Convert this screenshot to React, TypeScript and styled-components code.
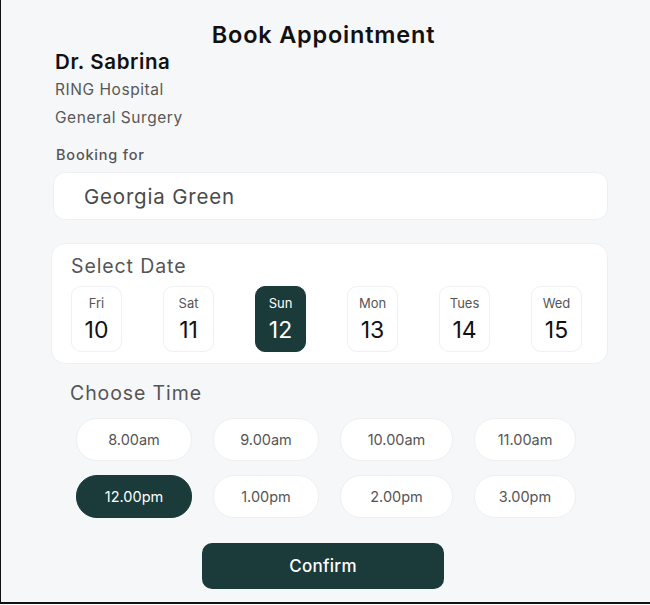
import React from "react";
import styled, { createGlobalStyle, css } from "styled-components";

const GlobalStyle = createGlobalStyle`
  html, body { margin: 0; padding: 0; background: #ffffff; }
  body { font-family: "Inter", "Lato", sans-serif; }
  * { box-sizing: border-box; }
`;

const DARK = "#1b3a3a";

const Page = styled.div`
  width: 650px;
  height: 604px;
  background: #f6f7f9;
  border-left: 1px solid #111;
  border-bottom: 2px solid #111;
  display: flex;
  flex-direction: column;
  padding: 20px 42px 0 50px;
`;

const Title = styled.h1`
  margin: 0 0 0 -50px;
  width: 649px;
  padding-right: 4px;
  text-align: center;
  font-size: 23.5px;
  line-height: 30px;
  font-weight: 600;
  letter-spacing: 0.8px;
  color: #111;
`;

const DoctorName = styled.div`
  margin: -1px 0 0 4px;
  font-size: 20.5px;
  line-height: 26px;
  font-weight: 600;
  letter-spacing: 0.6px;
  color: #111;
`;

const InfoLine = styled.div`
  margin: 2px 0 0 4px;
  font-size: 15.5px;
  line-height: 26px;
  letter-spacing: 0.55px;
  color: #585858;
`;

const Label = styled.div`
  margin: 14px 0 0 5px;
  font-size: 14.5px;
  line-height: 20px;
  font-weight: 500;
  letter-spacing: 0.8px;
  color: #555;
`;

const Input = styled.div`
  margin: 7px 0 0 2px;
  height: 48px;
  width: 555px;
  background: #fff;
  border: 1px solid #eeeff1;
  border-radius: 12px;
  display: flex;
  align-items: center;
  padding-left: 30px;
  font-size: 20.5px;
  letter-spacing: 0.8px;
  color: #4a4a4a;
`;

const Card = styled.div`
  margin-top: 23px;
  width: 557px;
  height: 121px;
  background: #fff;
  border: 1px solid #eeeff1;
  border-radius: 14px;
  padding: 10px 25px 0 19px;
`;

const SectionTitle = styled.div<{ $inset?: number }>`
  margin-left: ${(p) => p.$inset ?? 0}px;
  font-size: 19.5px;
  line-height: 24px;
  letter-spacing: 0.9px;
  color: #555;
`;

const DateRow = styled.div`
  margin-top: 8px;
  display: flex;
  justify-content: space-between;
`;

const selectedStyle = css`
  background: ${DARK};
  border-color: ${DARK};
  color: #fff;
`;

const DateChip = styled.div<{ $active?: boolean }>`
  width: 51px;
  height: 66px;
  border-radius: 10px;
  border: 1px solid #f1f1f3;
  background: #fff;
  color: #111;
  display: flex;
  flex-direction: column;
  align-items: center;
  padding-top: 8px;
  ${(p) => p.$active && selectedStyle}
`;

const DayName = styled.span<{ $active?: boolean }>`
  font-size: 13px;
  line-height: 16px;
  color: ${(p) => (p.$active ? "#fff" : "#555")};
`;

const DayNum = styled.span`
  margin-top: 5px;
  font-size: 23px;
  line-height: 28px;
  font-weight: 400;
`;

const TimeBlock = styled.div`
  margin-top: 17px;
`;

const TimeGrid = styled.div`
  margin: 13px 0 0 25px;
  display: grid;
  grid-template-columns: 116px 106px 113px 102px;
  grid-auto-rows: 43px;
  column-gap: 21px;
  row-gap: 14px;
`;

const Pill = styled.div<{ $active?: boolean }>`
  border-radius: 21px;
  border: 1px solid #eeeff1;
  background: #fff;
  color: #555;
  font-size: 14.5px;
  display: flex;
  align-items: center;
  justify-content: center;
  ${(p) => p.$active && selectedStyle}
`;

const ConfirmButton = styled.button`
  margin: 25px 0 0 151px;
  width: 242px;
  height: 46px;
  border: none;
  border-radius: 10px;
  background: ${DARK};
  color: #fff;
  font-family: inherit;
  font-size: 17px;
  font-weight: 500;
  letter-spacing: 0.3px;
  cursor: pointer;
`;

const dates = [
  { d: "Fri", n: 10 },
  { d: "Sat", n: 11 },
  { d: "Sun", n: 12 },
  { d: "Mon", n: 13 },
  { d: "Tues", n: 14 },
  { d: "Wed", n: 15 },
];

const times = [
  "8.00am",
  "9.00am",
  "10.00am",
  "11.00am",
  "12.00pm",
  "1.00pm",
  "2.00pm",
  "3.00pm",
];

export default function App() {
  const selectedDate = 12;
  const selectedTime = "12.00pm";
  return (
    <>
      <GlobalStyle />
      <Page>
        <Title>Book Appointment</Title>
        <DoctorName>Dr. Sabrina</DoctorName>
        <InfoLine>RING Hospital</InfoLine>
        <InfoLine>General Surgery</InfoLine>
        <Label>Booking for</Label>
        <Input>Georgia Green</Input>
        <Card>
          <SectionTitle>Select Date</SectionTitle>
          <DateRow>
            {dates.map((x) => (
              <DateChip key={x.n} $active={x.n === selectedDate}>
                <DayName $active={x.n === selectedDate}>{x.d}</DayName>
                <DayNum>{x.n}</DayNum>
              </DateChip>
            ))}
          </DateRow>
        </Card>
        <TimeBlock>
          <SectionTitle $inset={19}>Choose Time</SectionTitle>
          <TimeGrid>
            {times.map((t) => (
              <Pill key={t} $active={t === selectedTime}>
                {t}
              </Pill>
            ))}
          </TimeGrid>
        </TimeBlock>
        <ConfirmButton>Confirm</ConfirmButton>
      </Page>
    </>
  );
}
